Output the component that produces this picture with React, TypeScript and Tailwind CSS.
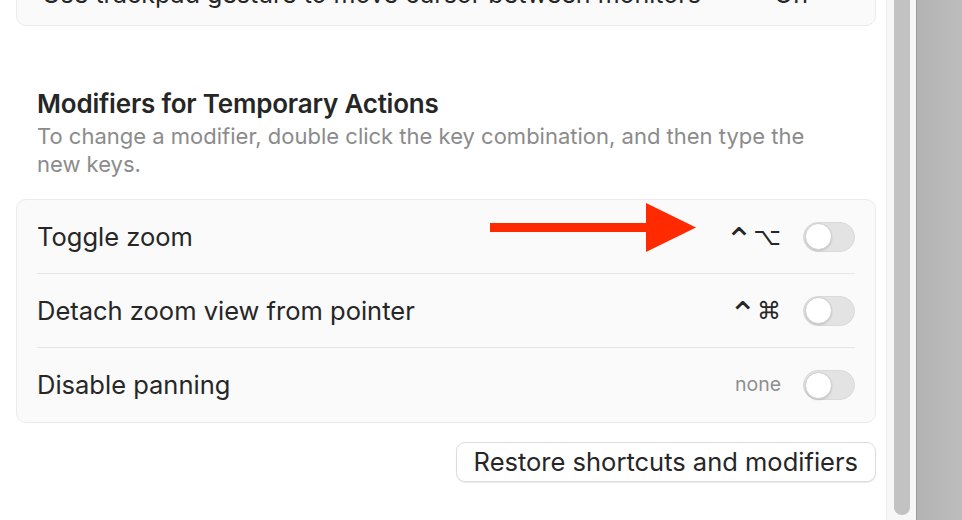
const font = { fontFamily: "Inter, 'Noto Sans', sans-serif" };

function Toggle() {
  return (
    <div className="flex h-[30px] w-[52px] shrink-0 items-center rounded-full border border-[#dadada] bg-[#e3e3e3] p-px">
      <div className="h-[27px] w-[27px] rounded-full border border-[#cfcfcf] bg-white shadow-[0_1px_2px_rgba(0,0,0,0.15)]" />
    </div>
  );
}

function Arrow() {
  return (
    <svg width="206" height="52" viewBox="0 0 206 52" className="shrink-0">
      <rect x="0" y="21" width="160" height="9" fill="#ff2a00" />
      <polygon points="156,1 206,25.5 156,50" fill="#ff2a00" />
    </svg>
  );
}

function Keys({ mod }: { mod: string }) {
  return (
    <span
      className="mr-[22px] flex w-[46px] items-center justify-end text-[#262626]"
      style={{ fontFamily: "'DejaVu Sans', sans-serif" }}
    >
      <span className="mt-[6px] text-[34px] leading-[28px]">⌃</span>
      <span className="text-[24px] leading-[28px]">{mod}</span>
    </span>
  );
}

const rows = [
  { label: "Toggle zoom", keys: "⌥", arrow: true },
  { label: "Detach zoom view from pointer", keys: "⌘" },
  { label: "Disable panning", keys: "none" },
];

export default function App() {
  return (
    <div className="flex h-[520px] w-[962px] overflow-hidden bg-white text-[#262626]" style={font}>
      <div className="flex w-[886px] shrink-0 flex-col pl-4 pr-[10px]">
        {/* row that is scrolled mostly out of view */}
        <div className="-mt-[42px] flex h-[68px] shrink-0 items-center rounded-[10px] border border-[#ebebeb] bg-[#fafafa] pl-[25px] pr-[24px]">
          <span className="mt-[4px] flex-1 text-[25px] leading-[28px]">Use trackpad gesture to move cursor between monitors</span>
          <span className="mt-[4px] mr-[12px] text-[25px] leading-[28px]">On</span>
          <div className="-mt-[34px] flex h-[42px] w-[31px] items-end justify-center rounded-[8px] bg-[#ececec] pb-[30px] shadow-[0_1px_1px_rgba(0,0,0,0.18)]">
            <svg width="12" height="8" viewBox="0 0 12 8">
              <path d="M1 1 L6 6 L11 1" fill="none" stroke="#333" strokeWidth="2.4" />
            </svg>
          </div>
        </div>

        <div className="mt-[64px] px-[21px]">
          <h2 className="text-[26px] font-semibold leading-[28px] tracking-[-0.2px]">Modifiers for Temporary Actions</h2>
          <p className="mt-[4px] max-w-[800px] text-[22px] leading-[28px] text-[#8b8b8b]">
            To change a modifier, double click the key combination, and then type the new keys.
          </p>
        </div>

        <div className="mt-[21px] flex flex-col rounded-[10px] border border-[#ebebeb] bg-[#fafafa] px-[20px]">
          {rows.map((r, i) => (
            <div
              key={r.label}
              className={
                "flex h-[74px] items-center " + (i < rows.length - 1 ? "border-b border-[#e6e6e6]" : "")
              }
            >
              <span className="flex-1 text-[25.5px] leading-[28px]">{r.label}</span>
              {r.arrow && (
                <div className="mr-[39px] -translate-y-[9px]">
                  <Arrow />
                </div>
              )}
              {r.keys === "none" ? (
                <span className="mr-[22px] w-[46px] text-right text-[19.5px] text-[#8e8e8e]">none</span>
              ) : (
                <Keys mod={r.keys} />
              )}
              <Toggle />
            </div>
          ))}
        </div>

        <div className="mt-[19px] flex justify-end">
          <button className="h-[40px] rounded-[9px] border border-[#dcdcdc] bg-white px-[17px] text-[25.5px] leading-[28px] text-[#262626] shadow-[0_1px_1px_rgba(0,0,0,0.08)]">
            Restore shortcuts and modifiers
          </button>
        </div>
      </div>

      {/* scrollbar */}
      <div className="flex w-[30px] shrink-0 border-l border-[#ececec] bg-[#f7f7f7] pl-[7px] pr-[5px]">
        <div className="h-[515px] w-[16px] rounded-b-full bg-[#c2c2c2]" />
      </div>
      <div className="flex-1 border-l border-[#9a9a9a] bg-gradient-to-r from-[#b3b3b3] to-[#bdbdbd]" />
    </div>
  );
}
